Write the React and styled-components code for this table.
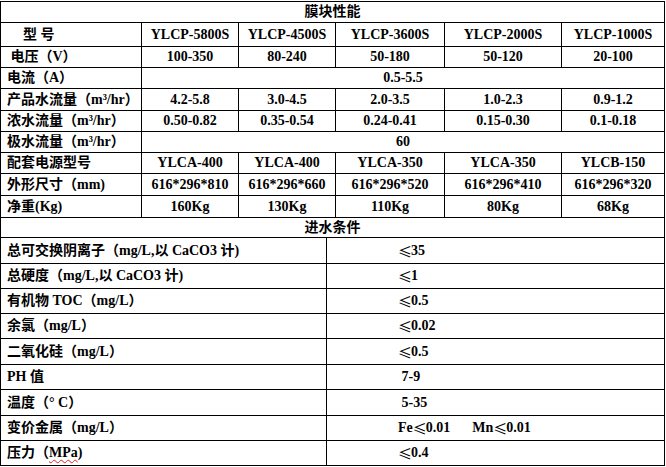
import React from "react";
import styled, { createGlobalStyle } from "styled-components";

const GlobalStyle = createGlobalStyle`
  html, body {
    margin: 0;
    padding: 0;
    background: #fff;
  }
  body {
    font-family: "Liberation Serif", "Noto Sans CJK SC", serif;
    font-weight: bold;
    font-size: 14px;
    color: #000;
  }
`;

const Sheet = styled.div`
  width: 665px;
  margin-top: 1px;
`;

const Grid = styled.div`
  display: grid;
  grid-template-columns: ${(p) => p.$cols};
  grid-template-rows: ${(p) => p.$rows};
  border-left: 1px solid #000;
  border-top: ${(p) => (p.$top ? "1px solid #000" : "none")};
`;

const Cell = styled.div`
  box-sizing: border-box;
  grid-column: span ${(p) => p.$span || 1};
  border-right: 1px solid #000;
  border-bottom: 1px solid #000;
  display: flex;
  align-items: center;
  justify-content: ${(p) => (p.$center ? "center" : "flex-start")};
  padding-left: ${(p) => (p.$center ? 0 : p.$indent || 6)}px;
  white-space: pre;
  line-height: 1;
  overflow: hidden;
`;

const Le = styled.span`
  font-family: "Noto Sans CJK SC", sans-serif;
  font-weight: normal;
  display: inline-block;
  width: 13px;
`;

const Gap = styled.span`
  display: inline-block;
  width: ${(p) => p.$w}px;
`;

const Typo = styled.span`
  text-decoration: underline wavy #e02020;
  text-decoration-thickness: 1px;
  text-underline-offset: 2px;
`;

const models = ["YLCP-5800S", "YLCP-4500S", "YLCP-3600S", "YLCP-2000S", "YLCP-1000S"];

const specRows = [
  { label: " 电压（V）", values: ["100-350", "80-240", "50-180", "50-120", "20-100"] },
  { label: "电流（A）", values: ["0.5-5.5"] },
  { label: "产品水流量（m³/hr）", values: ["4.2-5.8", "3.0-4.5", "2.0-3.5", "1.0-2.3", "0.9-1.2"] },
  { label: "浓水流量（m³/hr）", values: ["0.50-0.82", "0.35-0.54", "0.24-0.41", "0.15-0.30", "0.1-0.18"] },
  { label: "极水流量（m³/hr）", values: ["60"] },
  { label: "配套电源型号", values: ["YLCA-400", "YLCA-400", "YLCA-350", "YLCA-350", "YLCB-150"] },
  { label: "外形尺寸（mm)", values: ["616*296*810", "616*296*660", "616*296*520", "616*296*410", "616*296*320"] },
  { label: "净重(Kg)", values: ["160Kg", "130Kg", "110Kg", "80Kg", "68Kg"] },
];

const le = <Le>≤</Le>;

const feedRows = [
  ["总可交换阴离子（mg/L,以 CaCO3 计)", <>{le}35</>],
  ["总硬度（mg/L,以 CaCO3 计)", <>{le}1</>],
  ["有机物 TOC（mg/L）", <>{le}0.5</>],
  ["余氯（mg/L）", <>{le}0.02</>],
  ["二氧化硅（mg/L）", <>{le}0.5</>],
  ["PH 值", " 7-9"],
  ["温度（° C）", " 5-35"],
  ["变价金属（mg/L）", <>Fe{le}0.01<Gap $w={22} />Mn{le}0.01</>],
  [<>压力（<Typo>MPa</Typo>)</>, <>{le}0.4</>],
];

export default function App() {
  return (
    <>
      <GlobalStyle />
      <Sheet>
        <Grid
          $top
          $cols="141px 97px 97px 109px 117px 103px"
          $rows="21px 24px 21px 21px 22px 21px 21px 21px 22px 22px 20px"
        >
          <Cell $span={6} $center>膜块性能</Cell>
          <Cell $indent={22}>型 号</Cell>
          {models.map((m) => (
            <Cell key={m} $center>{m}</Cell>
          ))}
          {specRows.map((row) => (
            <React.Fragment key={row.label}>
              <Cell>{row.label}</Cell>
              {row.values.length === 1 ? (
                <Cell $span={5} $center>{row.values[0]}</Cell>
              ) : (
                row.values.map((v, i) => (
                  <Cell key={i} $center>{v}</Cell>
                ))
              )}
            </React.Fragment>
          ))}
          <Cell $span={6} $center>进水条件</Cell>
        </Grid>
        <Grid $cols="326px 338px" $rows="26px 25px 25px 25px 26px 25px 26px 25px 25px">
          {feedRows.map(([label, value], i) => (
            <React.Fragment key={i}>
              <Cell>{label}</Cell>
              <Cell $indent={71}>{value}</Cell>
            </React.Fragment>
          ))}
        </Grid>
      </Sheet>
    </>
  );
}
